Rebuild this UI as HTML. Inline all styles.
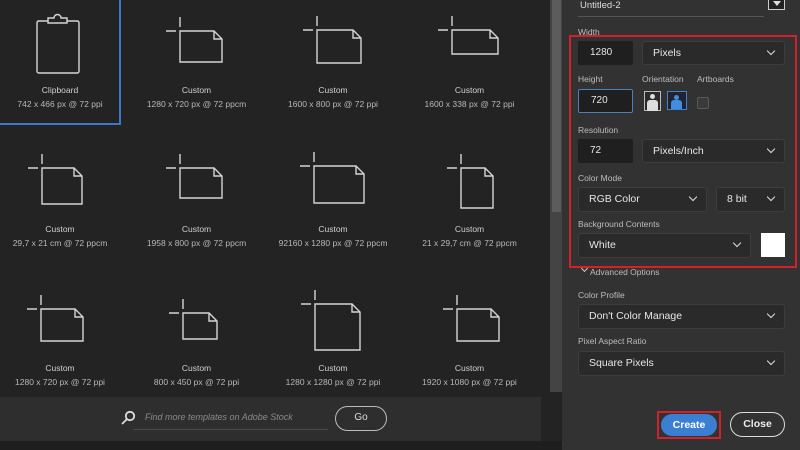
<!DOCTYPE html>
<html><head><meta charset="utf-8"><style>
*{margin:0;padding:0;box-sizing:border-box}
body{width:800px;height:450px;overflow:hidden;background:#232323;font-family:"Liberation Sans",sans-serif;position:relative;color:#d8d8d8}
.a{position:absolute}
.lbl{position:absolute;font-size:8.5px;color:#d0d0d0;text-align:center;width:136px;white-space:nowrap}
.sub{position:absolute;font-size:8.5px;color:#b8b8b8;text-align:center;width:136px;white-space:nowrap}
.pl{position:absolute;font-size:8.5px;color:#bdbdbd}
.fld{position:absolute;background:#1f1f1f;border-radius:2px;font-size:10px;color:#e6e6e6;padding-left:12px;line-height:24px}
.dd{position:absolute;background:#2a2a2a;border:1px solid #3d3d3d;border-radius:3px;font-size:10.5px;color:#e6e6e6;padding-left:10px;line-height:23px}
.dd:after{content:"";position:absolute;right:10px;top:6px;width:5px;height:5px;border-right:1.6px solid #ddd;border-bottom:1.6px solid #ddd;transform:rotate(45deg)}
</style></head><body>
<svg class="a" style="left:0;top:0" width="540" height="400" fill="none" stroke="#d4d4d4" stroke-width="1.4" id="ic">
<path d="M39 21 H48 V23 H67 V21 H77 Q79 21 79 23 V71 Q79 73 77 73 H39 Q37 73 37 71 V23 Q37 21 39 21 Z"/>
<path d="M48 21 V18 H54 A3.5 3.5 0 0 1 61 18 H67 V21"/></svg>
<div class="a" style="left:0;top:-2px;width:121px;height:127px;border-right:2px solid #3b78c6;border-bottom:2px solid #3b78c6"></div>
<div class="a" style="left:550px;top:0;width:12px;height:392px;background:#444"></div>
<div class="a" style="left:552px;top:0;width:9px;height:212px;background:#5c5c5c"></div>
<div class="a" style="left:562px;top:0;width:238px;height:450px;background:#323232"></div>
<div class="a" style="left:0;top:397px;width:541px;height:44px;background:#2e2e2e"></div>
<div class="a" style="left:0;top:441px;width:562px;height:9px;background:#1e1e1e"></div>
<div id="t"></div>
<svg class="a" style="left:120px;top:410px" width="16" height="16" fill="none" stroke="#ddd" stroke-width="1.8"><circle cx="10" cy="6" r="4.2"/><path d="M7 9 L2 14"/></svg>
<div class="a" style="left:145px;top:412px;font-size:9px;font-style:italic;color:#8a8a8a">Find more templates on Adobe Stock</div>
<div class="a" style="left:133px;top:429px;width:195px;height:1px;background:#4a4a4a"></div>
<div class="a" style="left:335px;top:406px;width:52px;height:25px;border:1.5px solid #bbb;border-radius:13px;font-size:10px;color:#ddd;text-align:center;line-height:22px">Go</div>
<div class="a" style="left:580px;top:0;font-size:9.5px;color:#ddd">Untitled-2</div>
<div class="a" style="left:578px;top:16px;width:186px;height:1px;background:#555"></div>
<div class="a" style="left:768px;top:-2px;width:17px;height:12px;border:1.5px solid #ccc;background:#222"></div>
<div class="a" style="left:773px;top:1px;width:0;height:0;border-left:4px solid transparent;border-right:4px solid transparent;border-top:5px solid #ddd"></div>
<div class="pl" style="left:578px;top:27px">Width</div>
<div class="a" style="left:569px;top:35px;width:228px;height:233px;border:2.5px solid #d1222b"></div>
<div class="fld" style="left:578px;top:41px;width:55px;height:24px">1280</div>
<div class="dd" style="left:642px;top:41px;width:143px;height:24px">Pixels</div>
<div class="pl" style="left:578px;top:74px">Height</div>
<div class="pl" style="left:642px;top:74px">Orientation</div>
<div class="pl" style="left:697px;top:74px">Artboards</div>
<div class="fld" style="left:578px;top:89px;width:55px;height:24px;border:1.5px solid #4d7fb8;line-height:21px">720</div>
<div class="a" style="left:644px;top:91px;width:17px;height:20px;border:1px solid #bbb;background:#2a2a2a"></div>
<div class="a" style="left:650px;top:94px;width:5px;height:5px;border-radius:50%;background:#ddd"></div>
<div class="a" style="left:647px;top:100px;width:11px;height:11px;border-radius:3px 3px 0 0;background:#ddd"></div>
<div class="a" style="left:667px;top:91px;width:20px;height:19px;border:1.5px solid #3f82d0;background:#223"></div>
<div class="a" style="left:674px;top:95px;width:5px;height:5px;border-radius:50%;background:#3f8ee0"></div>
<div class="a" style="left:671px;top:100px;width:11px;height:9px;border-radius:3px 3px 0 0;background:#3f8ee0"></div>
<div class="a" style="left:697px;top:97px;width:12px;height:12px;border:1px solid #5a5a5a;background:#3a3a3a;border-radius:2px"></div>
<div class="pl" style="left:578px;top:125px">Resolution</div>
<div class="fld" style="left:578px;top:139px;width:55px;height:24px">72</div>
<div class="dd" style="left:642px;top:139px;width:143px;height:24px">Pixels/Inch</div>
<div class="pl" style="left:578px;top:173px">Color Mode</div>
<div class="dd" style="left:578px;top:187px;width:129px;height:25px">RGB Color</div>
<div class="dd" style="left:716px;top:187px;width:69px;height:25px">8 bit</div>
<div class="pl" style="left:578px;top:219px">Background Contents</div>
<div class="dd" style="left:578px;top:233px;width:173px;height:25px">White</div>
<div class="a" style="left:761px;top:233px;width:24px;height:24px;background:#fff"></div>
<div class="a" style="left:582px;top:266px;width:5px;height:5px;border-right:1.5px solid #ccc;border-bottom:1.5px solid #ccc;transform:rotate(45deg)"></div>
<div class="pl" style="left:590px;top:267px">Advanced Options</div>
<div class="pl" style="left:578px;top:290px">Color Profile</div>
<div class="dd" style="left:578px;top:304px;width:207px;height:25px">Don't Color Manage</div>
<div class="pl" style="left:578px;top:336px">Pixel Aspect Ratio</div>
<div class="dd" style="left:578px;top:351px;width:207px;height:25px">Square Pixels</div>
<div class="a" style="left:657px;top:411px;width:64px;height:28px;border:2.5px solid #d1222b"></div>
<div class="a" style="left:661px;top:414px;width:56px;height:22px;background:#3b7fd2;border-radius:11px;font-size:10.5px;font-weight:bold;color:#fff;text-align:center;line-height:22px">Create</div>
<div class="a" style="left:730px;top:412px;width:55px;height:25px;border:1.5px solid #ddd;border-radius:13px;font-size:10.5px;font-weight:bold;color:#eee;text-align:center;line-height:22px">Close</div>
<script>
var T=[
["Clipboard","742 x 466 px @ 72 ppi",null,90],
["Custom","1280 x 720 px @ 72 ppcm",[180,31,222,62],90],
["Custom","1600 x 800 px @ 72 ppi",[317,30,361,63],90],
["Custom","1600 x 338 px @ 72 ppi",[452,30,498,54],90],
["Custom","29,7 x 21 cm @ 72 ppcm",[42,168,82,204],229],
["Custom","1958 x 800 px @ 72 ppcm",[180,168,222,198],229],
["Custom","92160 x 1280 px @ 72 ppcm",[314,166,364,203],229],
["Custom","21 x 29,7 cm @ 72 ppcm",[461,168,493,208],229],
["Custom","1280 x 720 px @ 72 ppi",[41,309,83,341],368],
["Custom","800 x 450 px @ 72 ppi",[183,313,217,339],368],
["Custom","1280 x 1280 px @ 72 ppi",[315,304,360,350],368],
["Custom","1920 x 1080 px @ 72 ppi",[457,309,499,341],368]];
var h="",s="";
T.forEach(function(t,i){var c=i%4,x=c*136.5-8;
h+='<div class="lbl" style="left:'+x+'px;top:'+(t[3]-5)+'px">'+t[0]+'</div><div class="sub" style="left:'+x+'px;top:'+(t[3]+9)+'px">'+t[1]+'</div>';
if(t[2]){var r=t[2],L=r[0],U=r[1],R=r[2],B=r[3],f=8;
s+='<path d="M'+L+' '+U+' H'+(R-f)+' L'+R+' '+(U+f)+' V'+B+' H'+L+' Z M'+(R-f)+' '+U+' V'+(U+f)+' H'+R+' M'+(L-14)+' '+U+' H'+(L-4)+' M'+L+' '+(U-14)+' V'+(U-4)+'"/>';}});
document.getElementById("t").innerHTML=h;
document.getElementById("ic").innerHTML+=s;
</script>
</body></html>
